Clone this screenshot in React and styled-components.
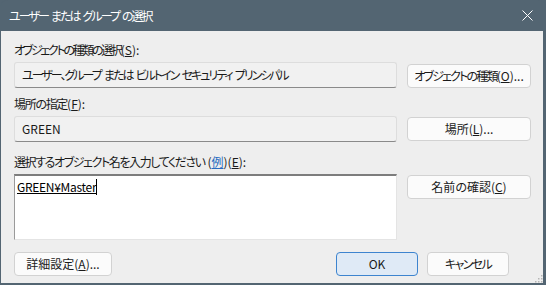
import React from "react";
import styled, { createGlobalStyle } from "styled-components";

const Global = createGlobalStyle`
  html, body { margin: 0; padding: 0; background: #536572; }
  body {
    font-family: "Noto Sans CJK JP", "Noto Sans", sans-serif;
    font-feature-settings: "palt" 1;
  }
  * { box-sizing: border-box; }
`;

const Window = styled.div`
  width: 546px;
  height: 285px;
  background: #536572;
  border-radius: 8px 8px 0 0;
  display: flex;
  flex-direction: column;
  overflow: hidden;
`;

const TitleBar = styled.div`
  height: 31px;
  flex: none;
  display: flex;
  align-items: center;
  justify-content: space-between;
  padding: 0 13px 0 9px;
  color: #ffffff;
  font-size: 12px;
`;

const TitleText = styled.span`
  letter-spacing: -1.9px;
  word-spacing: 2px;
`;

const Body = styled.div`
  flex: 1;
  margin: 0 3px 2px 1px;
  background: #eeeeee;
  padding: 11px 11px 0 13px;
  display: grid;
  grid-template-columns: 383px 124px;
  column-gap: 10px;
  align-content: start;
  position: relative;
`;

const Label = styled.div`
  grid-column: 1 / 3;
  height: 16px;
  line-height: 16px;
  font-size: 12px;
  color: #1a1a1a;
  margin-top: ${(p) => p.$gap || 0}px;
  margin-bottom: 4px;
  white-space: nowrap;
`;

const Kana = styled.span`
  letter-spacing: ${(p) => (p.$ls === undefined ? -1.8 : p.$ls)}px;
  word-spacing: ${(p) => p.$ws || 0}px;
`;

const Link = styled.span`
  color: #2a6cc0;
  text-decoration: underline;
`;

const ReadField = styled.div`
  height: 26px;
  border: 1px solid #dddddd;
  border-bottom-color: #8a8a8a;
  border-radius: 3px;
  background: #f1f1f1;
  padding: 0 7px;
  font-size: 12px;
  line-height: 23px;
  color: #1a1a1a;
  white-space: nowrap;
  overflow: hidden;
`;

const Button = styled.button`
  height: 24px;
  margin-top: ${(p) => p.$top || 1}px;
  align-self: start;
  font-family: inherit;
  font-feature-settings: "palt" 1;
  font-size: 12px;
  color: #1a1a1a;
  background: ${(p) => (p.$primary ? "#dfeaf6" : "#fbfbfb")};
  border: 1px solid ${(p) => (p.$primary ? "#3d84cf" : "#d2d2d2")};
  border-radius: 4px;
  padding: 0;
  white-space: nowrap;
  line-height: 20px;
  width: ${(p) => (p.$w ? p.$w + "px" : "auto")};
`;

const InputArea = styled.div`
  height: 66px;
  background: #ffffff;
  border-style: solid;
  border-width: 2px 1px 1px 1px;
  border-color: #7d7d7d #e4e4e4 #e4e4e4 #9a9a9a;
  padding: 3px 2px;
  font-size: 12px;
  line-height: 16px;
  letter-spacing: -0.3px;
  color: #000;
  display: flex;
  align-items: flex-start;
`;

const Resolved = styled.span`
  text-decoration: underline;
`;

const Caret = styled.span`
  display: inline-block;
  width: 1px;
  height: 16px;
  background: #000;
`;

const Footer = styled.div`
  grid-column: 1 / 3;
  margin-top: 11px;
  display: flex;
  align-items: center;
`;

const Spacer = styled.div`
  flex: 1;
`;

const FooterGap = styled.div`
  width: ${(p) => p.$w || 9}px;
`;

const Grip = styled.svg`
  position: absolute;
  right: 0;
  bottom: 0;
`;

export default function App() {
  return (
    <>
      <Global />
      <Window>
        <TitleBar>
          <TitleText>ユーザー または グループ の選択</TitleText>
          <svg width="11" height="11" viewBox="0 0 11 11">
            <path d="M0.5 0.5 L10.5 10.5 M10.5 0.5 L0.5 10.5" stroke="#fff" strokeWidth="1" />
          </svg>
        </TitleBar>
        <Body>
          <Label>
            <Kana $ls={-2.3}>オブジェクトの種類の選択</Kana>(<u>S</u>):
          </Label>
          <ReadField>
            <Kana $ls={-2} $ws={2.5}>ユーザー、グループ または ビルトイン セキュリティ プリンシパル</Kana>
          </ReadField>
          <Button $top={2}>
            <Kana $ls={-1.8}>オブジェクトの種類</Kana>(<u>O</u>)...
          </Button>

          <Label $gap={8}>
            <Kana $ls={-1.3}>場所の指定</Kana>(<u>F</u>):
          </Label>
          <ReadField>GREEN</ReadField>
          <Button $top={1}>
            場所(<u>L</u>)...
          </Button>

          <Label $gap={12}>
            <Kana $ls={-1.4}>選択するオブジェクト名を入力してください</Kana> (<Link>例</Link>)(<u>E</u>):
          </Label>
          <InputArea>
            <Resolved>GREEN¥Master</Resolved>
            <Caret />
          </InputArea>
          <Button $top={1}>
            名前の確認(<u>C</u>)
          </Button>

          <Footer>
            <Button $w={98} $top={0}>
              詳細設定(<u>A</u>)...
            </Button>
            <Spacer />
            <Button $primary $w={82} $top={0}>
              OK
            </Button>
            <FooterGap />
            <Button $w={82} $top={0}>
              <Kana $ls={-1.6}>キャンセル</Kana>
            </Button>
            <FooterGap $w={22} />
          </Footer>
          <Grip width="8" height="8" viewBox="0 0 8 8">
            <rect x="6" y="0" width="1.5" height="1.5" fill="#b5b5b5" />
            <rect x="3" y="3" width="1.5" height="1.5" fill="#b5b5b5" />
            <rect x="6" y="3" width="1.5" height="1.5" fill="#b5b5b5" />
            <rect x="0" y="6" width="1.5" height="1.5" fill="#b5b5b5" />
            <rect x="3" y="6" width="1.5" height="1.5" fill="#b5b5b5" />
            <rect x="6" y="6" width="1.5" height="1.5" fill="#b5b5b5" />
          </Grip>
        </Body>
      </Window>
    </>
  );
}
